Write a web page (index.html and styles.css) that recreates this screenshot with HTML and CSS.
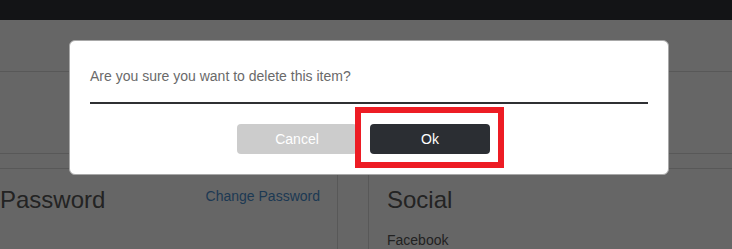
FILE: index.html
```html
<!DOCTYPE html>
<html>
<head>
<meta charset="utf-8">
<link rel="stylesheet" href="styles.css">
</head>
<body>
<div class="topbar"></div>
<div class="page-header"></div>
<div class="subhead"></div>
<div class="tabs"></div>
<div class="columns">
  <div class="col col-left">
    <div class="col-head">
      <h2 class="title">Password</h2>
      <a class="link">Change Password</a>
    </div>
  </div>
  <div class="col col-right">
    <h2 class="title">Social</h2>
    <div class="field">Facebook</div>
  </div>
</div>
<div class="overlay"></div>
<div class="modal">
  <p class="message">Are you sure you want to delete this item?</p>
  <div class="divider"></div>
  <div class="actions">
    <button class="btn btn-cancel">Cancel</button>
    <div class="ok-wrap">
      <button class="btn btn-ok">Ok</button>
      <div class="highlight"></div>
    </div>
  </div>
</div>
</body>
</html>
```
FILE: styles.css
```css
html, body {
  margin: 0;
  padding: 0;
  background: #ffffff;
  font-family: "Liberation Sans", Arial, sans-serif;
  overflow: hidden;
  height: 249px;
}
.topbar {
  height: 20px;
  background: #303237;
}
.page-header {
  height: 51px;
  border-bottom: 1px solid #dcdcdc;
}
.subhead {
  height: 81px;
  border-bottom: 1px solid #dcdcdc;
}
.tabs {
  height: 14px;
  border-bottom: 1px solid #dcdcdc;
}
.columns {
  display: flex;
  gap: 30px;
  height: 80px;
}
.col-left {
  width: 338px;
  border-right: 1px solid #dcdcdc;
  box-sizing: border-box;
  padding-right: 17px;
}
.col-right {
  flex: 1;
  border-left: 1px solid #dcdcdc;
  padding-left: 18px;
}
.col-head {
  display: flex;
  justify-content: space-between;
  align-items: flex-start;
}
.title {
  margin: 0;
  padding-top: 18px;
  font-size: 24px;
  font-weight: normal;
  line-height: 26.4px;
  color: #585858;
}
.link {
  padding-top: 17px;
  font-size: 14px;
  line-height: 20px;
  color: #4a8fd0;
}
.field {
  margin-top: 17px;
  font-size: 14px;
  line-height: 20px;
  color: #555555;
}
.overlay {
  position: fixed;
  inset: 0;
  background: rgba(0, 0, 0, 0.6);
}
.modal {
  position: fixed;
  left: 69px;
  top: 40px;
  width: 600px;
  box-sizing: border-box;
  background: #ffffff;
  border: 1px solid #a8a8a8;
  border-radius: 6px;
  padding: 25px 20px 20px;
}
.message {
  margin: 0;
  font-size: 14px;
  line-height: 20px;
  color: #6a6a6a;
}
.divider {
  margin-top: 16px;
  height: 2px;
  background: #2f3033;
}
.actions {
  margin-top: 20px;
  display: flex;
  justify-content: center;
  gap: 13px;
  padding-right: 11px;
}
.btn {
  width: 120px;
  height: 30px;
  border: none;
  border-radius: 4px;
  font-family: "Liberation Sans", Arial, sans-serif;
  font-size: 14px;
  color: #ffffff;
  padding: 0;
}
.btn-cancel {
  background: #cccccc;
}
.btn-ok {
  background: #2b2e33;
  display: block;
}
.ok-wrap {
  position: relative;
}
.highlight {
  position: absolute;
  left: -15px;
  top: -17px;
  right: -14px;
  bottom: -14px;
  border: 6px solid #ed1c24;
}
```
